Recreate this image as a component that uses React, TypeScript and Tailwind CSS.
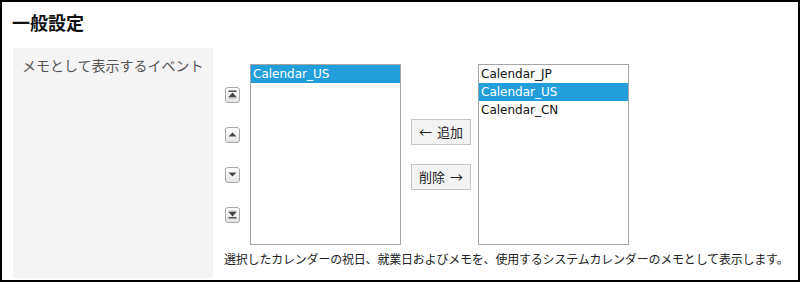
import React from "react";

const jp = { fontFamily: '"Noto Sans CJK JP", "Noto Sans", sans-serif' };
const latin = { fontFamily: '"DejaVu Sans", "Noto Sans CJK JP", sans-serif' };

function ArrowBtn({ kind }: { kind: "top" | "up" | "down" | "bottom" }) {
  return (
    <button className="w-[15px] h-[16px] rounded-[3px] border border-[#a8a8a8] bg-gradient-to-b from-white to-[#e4e4e4] flex items-center justify-center p-0">
      <svg width="9" height="9" viewBox="0 0 9 9">
        {kind === "top" && (
          <>
            <rect x="0.5" y="0.5" width="8" height="1.4" fill="#444" />
            <polygon points="4.5,2.6 8.5,7 0.5,7" fill="#444" />
            <rect x="0.5" y="7.3" width="8" height="1" fill="#999" />
          </>
        )}
        {kind === "up" && <polygon points="4.5,2.5 8.5,6.5 0.5,6.5" fill="#444" />}
        {kind === "down" && <polygon points="0.5,2.5 8.5,2.5 4.5,6.5" fill="#444" />}
        {kind === "bottom" && (
          <>
            <rect x="0.5" y="0.7" width="8" height="1" fill="#999" />
            <polygon points="0.5,2 8.5,2 4.5,6.4" fill="#444" />
            <rect x="0.5" y="7.1" width="8" height="1.4" fill="#444" />
          </>
        )}
      </svg>
    </button>
  );
}

function ListBox({ items, selected }: { items: string[]; selected: string }) {
  return (
    <div className="w-[151px] h-[181px] border border-[#a5a5a5] bg-white flex flex-col" style={latin}>
      {items.map((it) => (
        <div
          key={it}
          className={
            "h-[18px] pl-[2px] text-[12px] leading-[18px] whitespace-nowrap " +
            (it === selected ? "bg-[#229fdb] text-white" : "text-[#111]")
          }
        >
          {it}
        </div>
      ))}
    </div>
  );
}

export default function App() {
  return (
    <div className="w-[800px] h-[282px] border-2 border-black bg-white flex flex-col" style={jp}>
      <div className="h-[46px] pl-[10px] pt-[7px] text-[18px] font-bold leading-[26px] text-[#111]">一般設定</div>
      <div className="ml-[11px] flex h-[230px]">
        <div className="w-[200px] bg-[#f4f4f4] pl-[9px] pt-[7px] text-[14px] leading-[20px] text-[#555]">
          メモとして表示するイベント
        </div>
        <div className="pl-[12px] pt-[16px] flex flex-col">
          <div className="flex items-center h-[181px]">
            <div className="flex flex-col gap-[24px] w-[15px]">
              <ArrowBtn kind="top" />
              <ArrowBtn kind="up" />
              <ArrowBtn kind="down" />
              <ArrowBtn kind="bottom" />
            </div>
            <div className="ml-[10px]">
              <ListBox items={["Calendar_US"]} selected="Calendar_US" />
            </div>
            <div className="ml-[10px] flex flex-col gap-[19px]">
              <button className="w-[60px] h-[26px] border border-[#c6c6c6] bg-[#f3f3f3] text-[13px] text-[#222] leading-[24px] flex items-center justify-center gap-[5px]">
                <span>←</span>
                <span>追加</span>
              </button>
              <button className="w-[60px] h-[26px] border border-[#c6c6c6] bg-[#f3f3f3] text-[13px] text-[#222] leading-[24px] flex items-center justify-center gap-[5px]">
                <span>削除</span>
                <span>→</span>
              </button>
            </div>
            <div className="ml-[7px]">
              <ListBox items={["Calendar_JP", "Calendar_US", "Calendar_CN"]} selected="Calendar_US" />
            </div>
          </div>
          <div className="mt-[5px] -ml-[1px] text-[12px] leading-[18px] tracking-[-0.2px] text-[#222] whitespace-nowrap">
            選択したカレンダーの祝日、就業日およびメモを、使用するシステムカレンダーのメモとして表示します。
          </div>
        </div>
      </div>
    </div>
  );
}
